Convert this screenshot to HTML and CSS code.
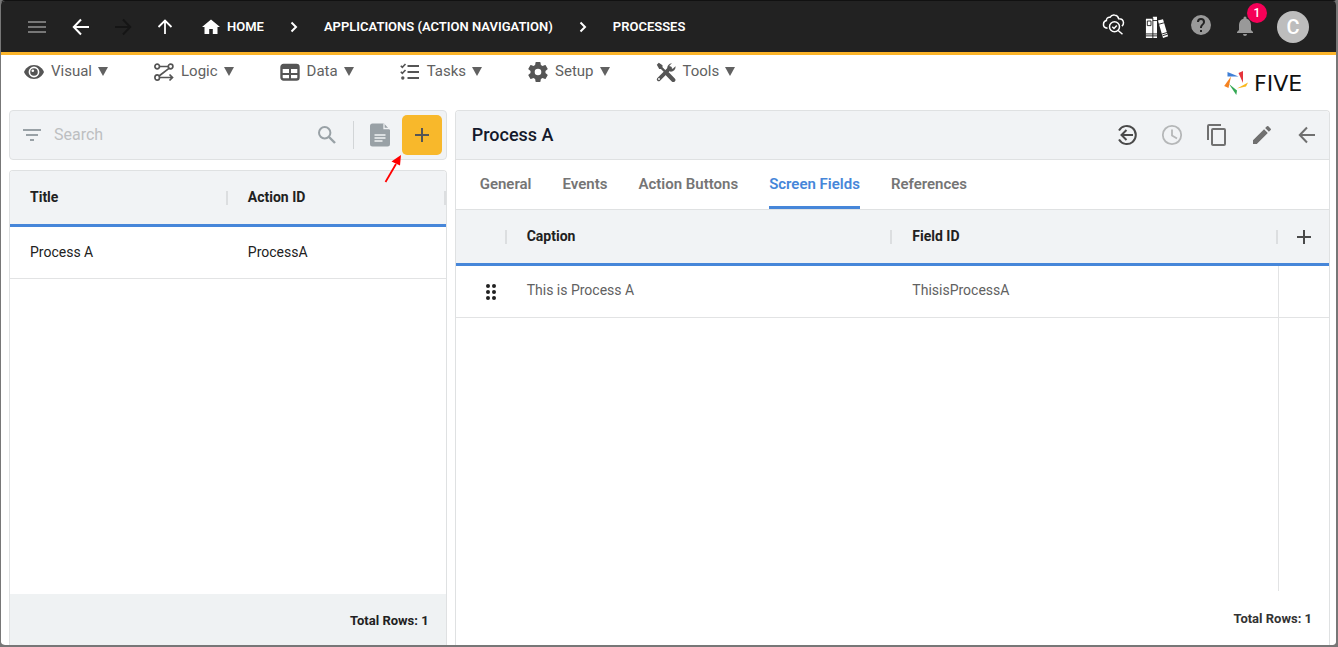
FILE: index.html
```html
<!DOCTYPE html>
<html lang="en">
<head>
<meta charset="utf-8">
<title>Five - Processes</title>
<link rel="stylesheet" href="styles.css">
</head>
<body>
<div class="app">
  <header class="topbar">
    <nav class="crumbs" aria-label="Breadcrumb">
      <button class="icon-btn wide dim" aria-label="Menu"><svg width="24" height="24" viewBox="0 0 24 24"><path d="M3 7h18M3 12h18M3 17h18" fill="none" stroke="currentColor" stroke-width="2"/></svg></button>
      <button class="icon-btn" aria-label="Back"><svg width="24" height="24" viewBox="0 0 24 24"><path d="M20 12H5M12 4.500 4.800 12l7.200 7.500" fill="none" stroke="currentColor" stroke-width="2"/></svg></button>
      <button class="icon-btn off" aria-label="Forward" disabled><svg width="24" height="24" viewBox="0 0 24 24"><path d="M4 12h15M12 4.500l7.200 7.500-7.200 7.500" fill="none" stroke="currentColor" stroke-width="2"/></svg></button>
      <button class="icon-btn" aria-label="Up"><svg width="24" height="24" viewBox="0 0 24 24"><path d="M12 19V6M5.500 12 12 5.500l6.500 6.500" fill="none" stroke="currentColor" stroke-width="1.800"/></svg></button>
      <a class="crumb home" href="#"><svg width="24" height="24" viewBox="0 0 24 24"><path d="M10.200 19v-5h3.600v5h4.700v-7H21L12 4.500 3 12h2.500v7z" fill="currentColor"/></svg>HOME</a>
      <svg class="chev" width="24" height="24" viewBox="0 0 24 24"><path d="M9.500 7.500 14 12l-4.500 4.500" fill="none" stroke="currentColor" stroke-width="2"/></svg>
      <a class="crumb" href="#">APPLICATIONS (ACTION NAVIGATION)</a>
      <svg class="chev" width="24" height="24" viewBox="0 0 24 24"><path d="M9.500 7.500 14 12l-4.500 4.500" fill="none" stroke="currentColor" stroke-width="2"/></svg>
      <a class="crumb" href="#">PROCESSES</a>
    </nav>
    <div class="tools">
      <button class="icon-btn cloud" aria-label="Inspect cloud"><svg width="24" height="24" viewBox="0 0 24 24" fill="none" stroke="currentColor" stroke-width="1.500"><path d="M6.500 15.300C3.800 15 2.300 13.200 2.500 11c.1-1.700 1.300-3 2.900-3.400C5.200 5.400 7 4 9 4.300c1-1.800 2.800-2.600 4.600-2.300 2.200.3 3.700 1.600 4.100 3.800 2.600-.1 4.500 1.500 4.800 3.700.1 1.500-.5 2.800-1.600 3.700"/><circle cx="13.500" cy="13.800" r="5"/><path d="m11.300 13.800 1.700 1.700 2.800-3M17.200 17.500l4.300 3.800"/></svg></button>
      <button class="icon-btn" aria-label="Library"><svg width="24" height="26" viewBox="0 0 26 26"><path d="M1 4h7.500v21H1zM8.500 2H13v23H8.500zM14 6l5.500-1.400L25 23l-5.500 2z" fill="currentColor"/><path d="M2.500 6.500h4v5h-4zM1 20.500h12M1 22.600h12M8.500 6H13M8.500 3v22M15 10l5.500-1.500M18.500 20.500l5.500-1.600M19 22.500l5.500-1.700" fill="none" stroke="#222" stroke-width="1"/></svg></button>
      <button class="icon-btn grey cloud" aria-label="Help"><svg width="24" height="24" viewBox="0 0 24 24"><path d="M12 2a10 10 0 1 0 0 20 10 10 0 0 0 0-20zm1 17h-2v-2h2zm2.070-7.750-.9.920C13.450 12.900 13 13.500 13 15h-2v-.5c0-1.100.45-2.100 1.170-2.830l1.240-1.260c.37-.36.590-.86.590-1.410a2 2 0 1 0-4 0H8a4 4 0 1 1 8 0c0 .88-.36 1.680-.93 2.250z" fill="currentColor"/></svg></button>
      <button class="icon-btn grey bell" aria-label="Notifications"><svg width="24" height="24" viewBox="0 0 24 24"><path d="M12 21c1.100 0 2-.9 2-2h-4a2 2 0 0 0 2 2zm6-6v-5c0-3.070-1.640-5.640-4.500-6.320V3a1.500 1.500 0 0 0-3 0v.68C7.630 4.360 6 6.920 6 10v5l-2 2v1h16v-1z" fill="currentColor"/></svg><span class="badge">1</span></button>
      <button class="avatar" aria-label="Account">C</button>
    </div>
  </header>

  <div class="menubar">
    <nav class="menus" aria-label="Main">
      <button class="menu"><svg width="20" height="20" viewBox="0 0 20 20"><path d="M10 3C5 3 1.300 6.500 0 10c1.300 3.500 5 7 10 7s8.700-3.500 10-7c-1.300-3.500-5-7-10-7z" fill="currentColor"/><circle cx="10" cy="10" r="4.600" fill="none" stroke="#fff" stroke-width="1.600"/><circle cx="8.800" cy="8.700" r="1.300" fill="#fff"/></svg><span class="menu-text">Visual<svg class="tri" width="10" height="10" viewBox="0 0 10 10"><path d="M0 1h10L5 10z" fill="currentColor"/></svg></span></button>
      <button class="menu"><svg width="20" height="20" viewBox="0 0 20 20" fill="none" stroke="currentColor" stroke-width="1.700"><circle cx="3.200" cy="4.500" r="2.300"/><circle cx="16.600" cy="4.500" r="2.300"/><ellipse cx="3.200" cy="15.500" rx="2.300" ry="2.700"/><path d="M5.500 4.500h8.800M15 6.300 5 14M5.500 15.500H18M15.500 12.500l3 3-3 3"/></svg><span class="menu-text">Logic<svg class="tri" width="10" height="10" viewBox="0 0 10 10"><path d="M0 1h10L5 10z" fill="currentColor"/></svg></span></button>
      <button class="menu"><svg width="20" height="20" viewBox="0 0 20 20"><rect x="1.500" y="3" width="17" height="14.500" rx="2" fill="none" stroke="currentColor" stroke-width="2.400"/><path d="M1 3h18v4H1z" fill="currentColor"/><path d="M10 5v13M1 12h18" stroke="currentColor" stroke-width="2"/></svg><span class="menu-text">Data<svg class="tri" width="10" height="10" viewBox="0 0 10 10"><path d="M0 1h10L5 10z" fill="currentColor"/></svg></span></button>
      <button class="menu"><svg width="20" height="20" viewBox="0 0 20 20"><path d="M7.500 4H19M7.500 10H19M7.500 16H19" fill="none" stroke="currentColor" stroke-width="2"/><path d="m.8 3.800 1.500 1.500L5.500 2M.8 9.800l1.500 1.500 3.200-3.300" fill="none" stroke="currentColor" stroke-width="1.600"/><circle cx="2.800" cy="16" r="1.700" fill="currentColor"/></svg><span class="menu-text">Tasks<svg class="tri" width="10" height="10" viewBox="0 0 10 10"><path d="M0 1h10L5 10z" fill="currentColor"/></svg></span></button>
      <button class="menu"><svg width="20" height="20" viewBox="2 2 20 20"><path d="M19.430 12.980c.04-.32.070-.64.070-.98s-.03-.66-.07-.98l2.110-1.650a.5.500 0 0 0 .12-.64l-2-3.460a.5.500 0 0 0-.61-.22l-2.490 1a7.300 7.300 0 0 0-1.690-.98l-.38-2.650A.49.490 0 0 0 14 2h-4a.49.490 0 0 0-.49.420l-.38 2.650c-.61.250-1.170.590-1.690.98l-2.490-1a.49.490 0 0 0-.61.220l-2 3.460a.49.490 0 0 0 .12.640l2.110 1.650a8 8 0 0 0 0 1.960l-2.110 1.650a.5.500 0 0 0-.12.640l2 3.460c.12.220.39.300.61.220l2.490-1c.52.400 1.080.730 1.690.98l.38 2.650c.03.240.24.420.49.420h4c.25 0 .46-.18.490-.42l.38-2.650a7.700 7.700 0 0 0 1.690-.98l2.490 1c.23.090.49 0 .61-.22l2-3.460a.5.500 0 0 0-.12-.64zM12 15.300a3.300 3.300 0 1 1 0-6.600 3.300 3.300 0 0 1 0 6.600z" fill="currentColor"/></svg><span class="menu-text">Setup<svg class="tri" width="10" height="10" viewBox="0 0 10 10"><path d="M0 1h10L5 10z" fill="currentColor"/></svg></span></button>
      <button class="menu"><svg width="20" height="20" viewBox="0 0 20 20"><path d="M.8 2.800 2.800.8l3.700 2.500v2L9.800 8.600 8.200 10.200 4.900 6.900h-1.700z" fill="currentColor"/><path d="m11.500 12 5.800 6" fill="none" stroke="currentColor" stroke-width="4.200" stroke-linecap="round"/><path d="M2.700 17.300 14 6.200" fill="none" stroke="currentColor" stroke-width="3.800" stroke-linecap="round"/><path d="M16 1.300a4.600 4.600 0 0 0-4.600 5.500l2.800 2.800a4.700 4.700 0 0 0 5.300-5.300l-2.700 2.500-2.700-.8-.6-2.500z" fill="currentColor"/><circle cx="3" cy="17" r=".9" fill="#fff"/></svg><span class="menu-text">Tools<svg class="tri" width="10" height="10" viewBox="0 0 10 10"><path d="M0 1h10L5 10z" fill="currentColor"/></svg></span></button>
    </nav>
    <a class="brand" href="#"><svg width="24" height="24" viewBox="0 0 24 24"><path d="M3.500 1v4.500h11z" fill="#3f7fd6"/><path d="M14.500 2 19 0v12z" fill="#e5343c"/><path d="M24 11.500 22 15.500l-9 2z" fill="#f9b81f"/><path d="M5 13l8 6.500-.7 4.500z" fill="#34a853"/><path d="M7 5.500 4.500 17 .2 15z" fill="#f58220"/></svg><span>FIVE</span></a>
  </div>

  <main class="main">
    <section class="left">
      <div class="search card">
        <svg class="filter" width="24" height="24" viewBox="0 0 24 24"><path d="M3 7h18M6 12h12M10 17h4" fill="none" stroke="currentColor" stroke-width="2"/></svg>
        <input class="search-input" type="text" placeholder="Search" aria-label="Search">
        <button class="icon-btn find" aria-label="Find"><svg width="24" height="24" viewBox="0 0 24 24"><circle cx="9.700" cy="9.700" r="5.700" fill="none" stroke="currentColor" stroke-width="2"/><path d="m14 14 6 6" stroke="currentColor" stroke-width="2.400"/></svg></button>
        <span class="divider"></span>
        <button class="icon-btn doc" aria-label="Report"><svg width="24" height="24" viewBox="0 0 24 24"><path d="M4.500.500H16L22 7v14a2.500 2.500 0 0 1-2.500 2.500h-15A2.500 2.500 0 0 1 2 21V3A2.500 2.500 0 0 1 4.500.500z" fill="currentColor"/><path d="M16 .5V5.500h6" fill="none" stroke="#f1f3f5" stroke-width="1.300"/><path d="M6.500 12h11M6.500 15h11M6.500 18h8" stroke="#f1f3f5" stroke-width="1.300"/></svg></button>
        <div class="add-wrap">
          <button class="add" aria-label="Add"><svg width="24" height="24" viewBox="0 0 24 24"><path d="M12 5v14M5 12h14" stroke="currentColor" stroke-width="2"/></svg></button>
          <svg class="pointer" width="20" height="30" viewBox="0 0 20 30"><path d="M1.500 28 12 10" stroke="#f00" stroke-width="1.800"/><path d="M17 1 7.500 7.500 16 11.500z" fill="#f00"/></svg>
        </div>
      </div>
      <div class="list card">
        <table class="grid">
          <thead><tr><th class="sep">Title</th><th class="sep">Action ID</th></tr></thead>
          <tbody><tr><td>Process A</td><td>ProcessA</td></tr></tbody>
        </table>
        <div class="list-foot">Total Rows: 1</div>
      </div>
    </section>

    <section class="detail card">
      <div class="detail-head">
        <h1 class="title">Process A</h1>
        <div class="actions">
          <button class="icon-btn dark" aria-label="Revert"><svg width="24" height="24" viewBox="0 0 24 24" fill="none" stroke="currentColor" stroke-width="2"><path d="M4 7.500a9 9 0 1 1 0 9M18 12H7M11.500 7 6.500 12l5 5"/></svg></button>
          <button class="icon-btn pale" aria-label="History"><svg width="24" height="24" viewBox="0 0 24 24" fill="none" stroke="currentColor" stroke-width="1.800"><circle cx="12" cy="12" r="9.200"/><path d="M12 6.500V12.500l5 3"/></svg></button>
          <button class="icon-btn" aria-label="Copy"><svg width="24" height="24" viewBox="0 0 24 24"><path d="M16 1H4a2 2 0 0 0-2 2v14h2V3h12zm3 4H8a2 2 0 0 0-2 2v14c0 1.100.9 2 2 2h11a2 2 0 0 0 2-2V7a2 2 0 0 0-2-2zm0 16H8V7h11z" fill="currentColor"/></svg></button>
          <button class="icon-btn" aria-label="Edit"><svg width="24" height="24" viewBox="0 0 24 24"><path d="M3 17.250V21h3.750L17.810 9.940l-3.750-3.750zM20.710 7.040a1 1 0 0 0 0-1.410l-2.340-2.340a1 1 0 0 0-1.410 0l-1.830 1.830 3.750 3.750z" fill="currentColor"/></svg></button>
          <button class="icon-btn" aria-label="Close"><svg width="24" height="24" viewBox="0 0 24 24"><path d="M20 12H5M12 4.500 4.800 12l7.200 7.500" fill="none" stroke="currentColor" stroke-width="2"/></svg></button>
        </div>
      </div>
      <div class="tabs" role="tablist">
        <button class="tab" role="tab">General</button>
        <button class="tab" role="tab">Events</button>
        <button class="tab" role="tab">Action Buttons</button>
        <button class="tab active" role="tab" aria-selected="true">Screen Fields</button>
        <button class="tab" role="tab">References</button>
      </div>
      <table class="grid fields">
        <colgroup><col class="c-grip"><col><col><col class="c-add"></colgroup>
        <thead><tr><th class="sep"></th><th class="sep">Caption</th><th class="sep">Field ID</th><th class="cell-btn"><button class="icon-btn dark" aria-label="Add field"><svg width="24" height="24" viewBox="0 0 24 24"><path d="M12 5v14M5 12h14" stroke="currentColor" stroke-width="2"/></svg></button></th></tr></thead>
        <tbody><tr><td class="cell-grip"><svg width="24" height="24" viewBox="0 0 24 24" fill="currentColor"><circle cx="9" cy="6" r="2"/><circle cx="15" cy="6" r="2"/><circle cx="9" cy="12" r="2"/><circle cx="15" cy="12" r="2"/><circle cx="9" cy="18" r="2"/><circle cx="15" cy="18" r="2"/></svg></td><td>This is Process A</td><td>ThisisProcessA</td><td class="cell-end"></td></tr></tbody>
      </table>
      <div class="empty"><div class="empty-end"></div></div>
      <div class="detail-foot">Total Rows: 1</div>
    </section>
  </main>
</div>
</body>
</html>
```

FILE: styles.css
```css
* { box-sizing: border-box; }

body {
  margin: 0;
  background: #777;
  font-family: Roboto, "Liberation Sans", sans-serif;
  font-size: 14px;
  color: #212121;
}

button {
  font: inherit;
  color: inherit;
  background: none;
  border: 0;
  padding: 0;
  cursor: pointer;
}

a { color: inherit; text-decoration: none; }
svg { display: block; flex: none; }

.app {
  display: flex;
  flex-direction: column;
  min-height: 100vh;
  background: #fff;
  background-clip: padding-box;
  border: solid #777;
  border-width: 1px 2px 2px 1px;
  border-top-color: #111;
  border-radius: 5px;
  overflow: hidden;
}

/* Top bar */
.topbar {
  display: flex;
  justify-content: space-between;
  align-items: center;
  height: 54px;
  padding: 0 27px 0 22px;
  background: #222;
  color: #fff;
  border-bottom: 3px solid #fbb429;
}

.crumbs { display: flex; align-items: center; gap: 18px; }
.crumb { font-size: 13px; font-weight: 600; white-space: nowrap; }
.home { display: flex; align-items: center; gap: 4px; margin-left: 4px; }

.icon-btn { display: flex; align-items: center; justify-content: center; min-width: 24px; height: 24px; }
.wide { width: 28px; }
.dim { color: #777; }
.off { color: #151515; }
.grey { color: #999; }

.tools { display: flex; align-items: center; gap: 20px; }
.cloud { height: 28px; align-items: flex-start; }
.bell { position: relative; }
.badge {
  position: absolute;
  top: -12px;
  right: -10px;
  width: 20px;
  height: 20px;
  border-radius: 50%;
  background: #f50057;
  color: #fff;
  font-size: 12px;
  font-weight: 500;
  line-height: 20px;
  text-align: center;
}
.avatar {
  width: 32px;
  height: 32px;
  border-radius: 50%;
  background: #bdbdbd;
  color: #fff;
  font-size: 20px;
  font-weight: 500;
  line-height: 32px;
}

/* Menu bar */
.menubar {
  display: flex;
  justify-content: space-between;
  height: 55px;
  padding: 6px 24px 0 23px;
}
.menus { display: flex; align-items: flex-start; gap: 46px; }
.menu {
  display: flex;
  align-items: center;
  gap: 7px;
  height: 22px;
  font-size: 15px;
  line-height: 18px;
  color: #555;
}
.menu-text { display: flex; align-items: center; gap: 6px; padding-bottom: 2px; color: #616161; }
.brand { display: flex; align-items: center; gap: 6px; height: 44px; color: #111; }
.brand span { min-width: 58px; font-family: "DejaVu Sans", sans-serif; font-size: 22px; }

/* Panels */
.main {
  flex: 1;
  display: grid;
  grid-template-columns: minmax(0, 1fr) minmax(0, 2fr);
  gap: 8px;
  padding: 0 6px 0 8px;
}
.card { border: 1px solid #dfe1e2; border-radius: 4px; }

.left { display: flex; flex-direction: column; gap: 10px; }
.search {
  display: flex;
  align-items: center;
  height: 50px;
  padding: 0 4px 0 10px;
  background: #f1f3f5;
  color: #99a1a6;
}
.search-input {
  flex: 1;
  min-width: 0;
  margin-left: 10px;
  padding: 0 0 2px;
  border: 0;
  outline: 0;
  background: none;
  font-family: inherit;
  font-size: 16px;
  color: #212121;
}
.search-input::placeholder { color: #bdbfc1; opacity: 1; }
.divider { width: 1px; height: 28px; margin: 0 14px; background: #d2d5d7; }
.add-wrap { position: relative; margin-left: 10px; }
.add {
  display: flex;
  align-items: center;
  justify-content: center;
  width: 40px;
  height: 40px;
  border-radius: 5px;
  background: #f8b82b;
  color: #555;
}
.pointer { position: absolute; top: 39px; left: -18px; }

.list, .detail {
  display: flex;
  flex-direction: column;
  border-bottom: 0;
  border-bottom-left-radius: 0;
  border-bottom-right-radius: 0;
  overflow: hidden;
}
.list { flex: 1; }

.grid { width: 100%; table-layout: fixed; border-collapse: separate; border-spacing: 0; }
.grid th {
  height: 56px;
  padding: 0 20px 2px;
  background: #f1f3f5;
  border-bottom: 3px solid #4686d9;
  text-align: left;
  font-weight: 700;
}
.grid .sep {
  background: linear-gradient(#dcdee0, #dcdee0) right center / 2px 14px no-repeat, #f1f3f5;
}
.grid td { height: 52px; padding: 0 20px 2px; border-bottom: 1px solid #e2e3e4; }

.list-foot {
  margin-top: auto;
  padding: 17px 17px 15px;
  background: #eff2f3;
  font-size: 13px;
  font-weight: 700;
  line-height: 19px;
  text-align: right;
}

.detail-head {
  display: flex;
  align-items: center;
  justify-content: space-between;
  height: 49px;
  padding: 0 10px 0 16px;
  background: #f1f3f5;
  border-bottom: 1px solid #dfe1e2;
}
.title { margin: 0; padding-bottom: 2px; font-size: 18px; font-weight: 500; color: #14192b; }
.actions { display: flex; gap: 21px; color: #707070; }
.dark { color: #4a4a4a; }
.pale { color: #b5b7b8; }

.tabs {
  display: flex;
  gap: 31px;
  height: 50px;
  padding: 0 24px;
  border-bottom: 1px solid #dfe1e2;
  color: #757575;
}
.tab { font-size: 15px; font-weight: 600; border-top: 1px solid transparent; border-bottom: 3px solid transparent; }
.active { color: #4686d9; border-bottom-color: #4686d9; }

.c-grip { width: 51px; }
.c-add { width: 51px; }
.fields td { padding-bottom: 4px; color: #616161; }
.grid .cell-btn { padding: 0 0 0 14px; }
.grid .cell-grip { padding: 0 0 0 23px; color: #212121; }
.grid .cell-end { border-left: 1px solid #e2e3e4; }

.empty { flex: 1; display: flex; justify-content: flex-end; }
.empty-end { width: 51px; border-left: 1px solid #e2e3e4; }
.detail-foot {
  padding: 19px 17px 17px;
  font-size: 13px;
  font-weight: 700;
  line-height: 18px;
  text-align: right;
  color: #333;
}
```
